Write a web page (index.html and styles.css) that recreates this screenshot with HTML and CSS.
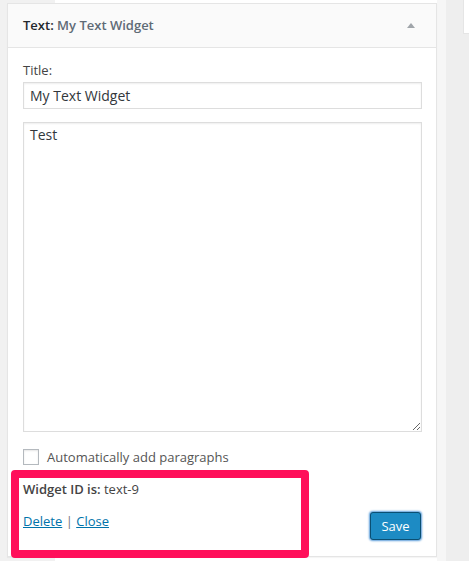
FILE: index.html
```html
<!DOCTYPE html>
<html>
<head>
<meta charset="utf-8">
<link rel="stylesheet" href="styles.css">
</head>
<body>
<div class="page">
  <div class="main">
    <div class="widget">
      <div class="widget-top">
        <h3 class="widget-title">Text<span class="colon">:</span> <span class="in-title">My Text Widget</span></h3>
        <span class="toggle"></span>
      </div>
      <div class="widget-inside">
        <label class="field-label" for="title">Title:</label>
        <input id="title" class="text-input" type="text" value="My Text Widget">
        <textarea class="text-area">Test</textarea>
        <label class="check-row"><span class="checkbox"></span><span class="check-label">Automatically add paragraphs</span></label>
        <p class="widget-id"><strong>Widget ID is:</strong> text-9</p>
        <div class="control-actions">
          <div class="links"><a href="#">Delete</a> <span class="sep">|</span> <a href="#">Close</a></div>
          <button class="save-btn" type="button">Save</button>
        </div>
      </div>
    </div>
    <div class="highlight"></div>
  </div>
  <div class="gutter"></div>
  <div class="side">
    <div class="side-box"></div>
  </div>
</div>
</body>
</html>
```
FILE: styles.css
```css
* { box-sizing: border-box; }
html, body { margin: 0; padding: 0; }
body {
  background: #f1f1f1;
  font-family: "Open Sans", "Liberation Sans", sans-serif;
  color: #444;
}
.page {
  width: 469px;
  height: 561px;
  overflow: hidden;
  display: flex;
}
.main {
  position: relative;
  width: 437px;
  padding: 3px 0 0 7px;
  background: linear-gradient(to right, #f1f1f1 55px, #ffffff 55px);
}
.widget {
  width: 430px;
  height: 554px;
  background: #fff;
  border: 1px solid #e5e5e5;
  box-shadow: 0 1px 1px rgba(0,0,0,0.04);
  display: flex;
  flex-direction: column;
}
.widget-top {
  height: 44px;
  background: #fafafa;
  border-bottom: 1px solid #e5e5e5;
  display: flex;
  align-items: center;
  justify-content: space-between;
  padding: 0 21px 0 15px;
}
.widget-title {
  margin: 0;
  font-size: 13px;
  font-weight: 600;
  color: #23282d;
  line-height: 1;
}
.in-title { color: #5f6b76; }
.toggle {
  width: 0;
  height: 0;
  border-left: 4px solid transparent;
  border-right: 4px solid transparent;
  border-bottom: 5px solid #a0a5aa;
}
.widget-inside {
  padding: 13px 15px 0 15px;
  display: flex;
  flex-direction: column;
  flex: 1;
}
.field-label {
  font-size: 13px;
  line-height: 19px;
  color: #444;
  margin-bottom: 2px;
}
.text-input {
  width: 399px;
  height: 27px;
  border: 1px solid #ddd;
  box-shadow: inset 0 1px 2px rgba(0,0,0,0.07);
  font-family: inherit;
  font-size: 14px;
  color: #32373c;
  padding: 2px 6px;
  margin: 0;
  outline: none;
}
.text-area {
  width: 399px;
  height: 310px;
  margin-top: 13px;
  border: 1px solid #ddd;
  box-shadow: inset 0 1px 2px rgba(0,0,0,0.07);
  font-family: inherit;
  font-size: 14px;
  line-height: 20px;
  color: #32373c;
  padding: 2px 6px;
  resize: vertical;
  outline: none;
}
.check-row {
  display: flex;
  align-items: center;
  margin-top: 17px;
  height: 16px;
}
.checkbox {
  width: 16px;
  height: 16px;
  border: 1px solid #b4b9be;
  background: #fff;
  box-shadow: inset 0 1px 2px rgba(0,0,0,0.1);
  margin-right: 8px;
}
.check-label {
  font-size: 13px;
  color: #555;
}
.widget-id {
  margin: 15px 0 0 0;
  font-size: 13px;
  line-height: 19px;
  color: #444;
}
.widget-id strong { font-weight: 600; }
.control-actions {
  display: flex;
  justify-content: space-between;
  align-items: flex-start;
  margin-top: 13px;
}
.links {
  font-size: 13px;
  line-height: 19px;
  color: #555;
}
.links a { color: #0073aa; text-decoration: underline; }
.sep { color: #777; }
.save-btn {
  width: 51px;
  height: 28px;
  margin-top: 0;
  background: #1d8bc4;
  border: 1px solid #0b4f73;
  border-radius: 3px;
  box-shadow: 0 0 2px 1px #5b9dd9;
  color: #fff;
  font-family: inherit;
  font-size: 13px;
  padding: 0;
}
.highlight {
  position: absolute;
  left: 11px;
  top: 470px;
  width: 298px;
  height: 88px;
  border: 8px solid #ff0f5a;
  border-radius: 4px;
}
.gutter {
  width: 9px;
  background: #f6f6f6;
}
.side {
  flex: 1;
  background: #eeeeee;
  padding-left: 17px;
}
.side-box {
  height: 34px;
  background: #fff;
  border-left: 1px solid #e5e5e5;
  border-bottom: 1px solid #e5e5e5;
}
```
